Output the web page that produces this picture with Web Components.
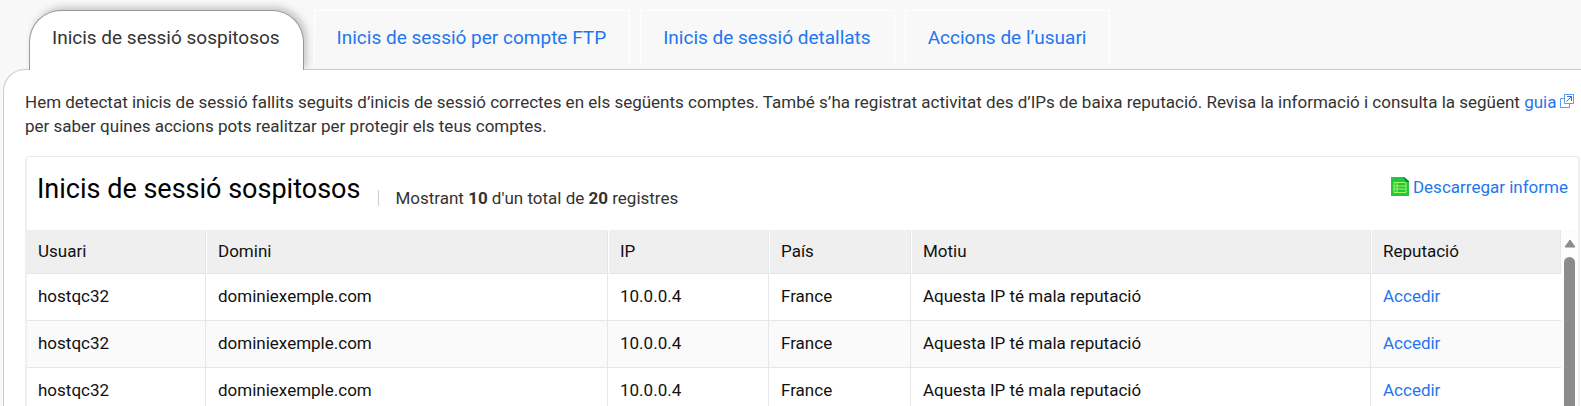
<!DOCTYPE html>
<html lang="ca">
<head>
<meta charset="utf-8">
<title>Inicis de sessió sospitosos</title>
<style>
  body {
    --link: #1f76ee;
    margin: 0;
    height: 100vh;
    overflow: hidden;
    display: flex;
    flex-direction: column;
    background: #f8f8f8;
    color: #333;
    font-family: Roboto, "Liberation Sans", sans-serif;
    font-size: 17px;
    line-height: 24px;
  }
</style>
</head>
<body>
  <tab-bar>
    <tab-item active>Inicis de sessió sospitosos</tab-item>
    <tab-item>Inicis de sessió per compte FTP</tab-item>
    <tab-item>Inicis de sessió detallats</tab-item>
    <tab-item>Accions de l’usuari</tab-item>
  </tab-bar>
  <tab-panel>
    <intro-text></intro-text>
    <records-card heading="Inicis de sessió sospitosos" shown="10" total="20">
      <download-link slot="action">Descarregar informe</download-link>
      <login-table></login-table>
    </records-card>
  </tab-panel>

<script>
const define = (name, html, setup) => {
  const template = document.createElement("template");
  template.innerHTML = html;

  window.customElements.define(name, class extends HTMLElement {
    constructor() {
      super();
      const shadowRoot = this.attachShadow({ mode: "open" });
      shadowRoot.appendChild(template.content.cloneNode(true));
    }
    connectedCallback() {
      if (setup) setup(this, this.shadowRoot);
    }
  });
};

define("tab-bar", `
  <style>
    :host {
      display: block;
      flex: none;
      position: relative;
      z-index: 1;
    }
    nav {
      display: flex;
      align-items: flex-start;
      gap: 10px;
      padding: 10px 29px 0;
      height: 59px;
    }
  </style>
  <nav><slot></slot></nav>
`);

define("tab-item", `
  <style>
    :host {
      display: block;
      font-size: 19px;
    }
    a {
      display: block;
      box-sizing: border-box;
      height: 54px;
      padding: 15px 23px 0 22px;
      border: 1px solid #fff;
      border-bottom: 0;
      color: var(--link);
      text-decoration: none;
      white-space: nowrap;
    }
    /* runs 1px over the panel so its top border is hidden */
    :host([active]) a {
      height: 60px;
      border-color: #999;
      border-radius: 32px 32px 0 0;
      background: #fff;
      color: #333;
      box-shadow: 3px -3px 7px rgba(0, 0, 0, .2);
      clip-path: inset(-12px -12px 0 -12px);
    }
  </style>
  <a href="#"><slot></slot></a>
`);

define("tab-panel", `
  <style>
    :host {
      display: block;
      flex: 1;
      min-height: 0;
      margin-left: 3px;
      padding: 20px 1px 0 21px;
      border: 1px solid #ccc;
      border-width: 1px 0 0 1px;
      border-radius: 22px 0 0 0;
      background: #fff;
    }
  </style>
  <slot></slot>
`);

define("intro-text", `
  <style>
    :host {
      display: block;
    }
    p {
      margin: 0 0 18px;
    }
    a {
      color: var(--link);
      text-decoration: none;
    }
    svg {
      width: 14px;
      height: 14px;
      margin-left: 4px;
    }
  </style>
  <p>Hem detectat inicis de sessió fallits seguits d’inicis de sessió correctes en els següents comptes. També s’ha registrat activitat des d’IPs de baixa reputació. Revisa la informació i consulta la següent <a href="#">guia<svg viewBox="0 0 14 14" fill="none" stroke="#5b9bf0" aria-hidden="true"><path d="M4.500.500h9v9h-9z"/><path d="M4.500 4.500h-4v9h9v-4"/><path d="M6.500 7.500l5-5M7 2.500h4.500v4.500" stroke="#1f76ee"/></svg></a> per saber quines accions pots realitzar per protegir els teus comptes.</p>
`);

define("records-card", `
  <style>
    :host {
      display: block;
      border: 2px solid #eff0f1;
      border-top: 1px solid #e8eaec;
      border-radius: 4px;
    }
    header {
      display: flex;
      align-items: center;
      height: 73px;
      padding: 0 10px;
    }
    h1 {
      margin: 0 18px 10px 0;
      color: #000;
      font-size: 27px;
      font-weight: 400;
      line-height: 32px;
    }
    .count {
      display: flex;
      align-items: center;
      gap: 16px;
      margin-top: 9px;
    }
    .count::before {
      content: "";
      width: 1px;
      height: 16px;
      background: #ccc;
    }
    .action {
      margin: 0 0 14px auto;
    }
  </style>
  <header>
    <h1></h1>
    <div class="count"><span>Mostrant <b id="shown"></b> d'un total de <b id="total"></b> registres</span></div>
    <div class="action"><slot name="action"></slot></div>
  </header>
  <slot></slot>
`, (host, root) => {
  root.querySelector("h1").textContent = host.getAttribute("heading");
  root.querySelector("#shown").textContent = host.getAttribute("shown");
  root.querySelector("#total").textContent = host.getAttribute("total");
});

define("download-link", `
  <style>
    :host {
      display: block;
    }
    a {
      display: flex;
      align-items: center;
      gap: 4px;
      color: var(--link);
      text-decoration: none;
      white-space: nowrap;
    }
    svg {
      width: 18px;
      height: 19px;
    }
  </style>
  <a href="#">
    <svg viewBox="0 0 18 19" aria-hidden="true">
      <path d="M0 0h13l5 5v14H0z" fill="#1fc843"/>
      <path d="M12 0h1l5 4v1h-3z" fill="#0b8a25"/>
      <path d="M3 5.500h12v10H3zM3 9h12M3 12h12M6 5.500v10" fill="none" stroke="#a5f55c"/>
    </svg>
    <slot></slot>
  </a>
`);

define("scroll-rail", `
  <style>
    :host {
      display: flex;
      flex-direction: column;
      align-items: center;
      gap: 9px;
      box-sizing: border-box;
      width: 17px;
      padding-top: 9px;
      background: #fcfcfc;
    }
    svg {
      flex: none;
      width: 12px;
      height: 9px;
    }
    div {
      flex: 1;
      width: 11px;
      border-radius: 6px;
      background: #8b8b8b;
    }
  </style>
  <svg viewBox="0 0 12 9" aria-hidden="true"><path d="M6 1l5 7H1z" fill="#8b8b8b" stroke="#8b8b8b" stroke-linejoin="round"/></svg>
  <div></div>
`);

const logins = [
  ["hostqc32", "dominiexemple.com", "10.0.0.4", "France", "Aquesta IP té mala reputació"],
  ["hostqc32", "dominiexemple.com", "10.0.0.4", "France", "Aquesta IP té mala reputació"],
  ["hostqc32", "dominiexemple.com", "10.0.0.4", "France", "Aquesta IP té mala reputació"],
];

define("login-table", `
  <style>
    :host {
      display: flex;
      color: #111;
    }
    table {
      flex: 1;
      width: 0;
      table-layout: fixed;
      border-collapse: separate;
      border-spacing: 0;
    }
    .user { width: 179px; }
    .domain { width: 402px; }
    .ip { width: 161px; }
    .country { width: 142px; }
    .reputation { width: 190px; }
    th, td {
      box-sizing: border-box;
      height: 47px;
      padding: 0 11px 2px;
      border-right: 1px solid #e3e7eb;
      border-bottom: 1px solid #e3e7eb;
      text-align: left;
      font-weight: 400;
    }
    th {
      height: 44px;
      background: #efefef;
    }
    th + th {
      border-left: 1px solid #fff;
    }
    td + td {
      padding-left: 12px;
    }
    td:last-child {
      border-right: 0;
    }
    tbody tr:nth-child(even) {
      background: #fafafa;
    }
    a {
      color: var(--link);
      text-decoration: none;
    }
  </style>
  <table>
    <colgroup>
      <col class="user"><col class="domain"><col class="ip"><col class="country"><col><col class="reputation">
    </colgroup>
    <thead>
      <tr><th>Usuari</th><th>Domini</th><th>IP</th><th>País</th><th>Motiu</th><th>Reputació</th></tr>
    </thead>
    <tbody></tbody>
  </table>
  <scroll-rail></scroll-rail>
`, (host, root) => {
  root.querySelector("tbody").innerHTML = logins.map(row =>
    `<tr>${row.map(cell => `<td>${cell}</td>`).join("")}<td><a href="#">Accedir</a></td></tr>`
  ).join("");
});
</script>
</body>
</html>
